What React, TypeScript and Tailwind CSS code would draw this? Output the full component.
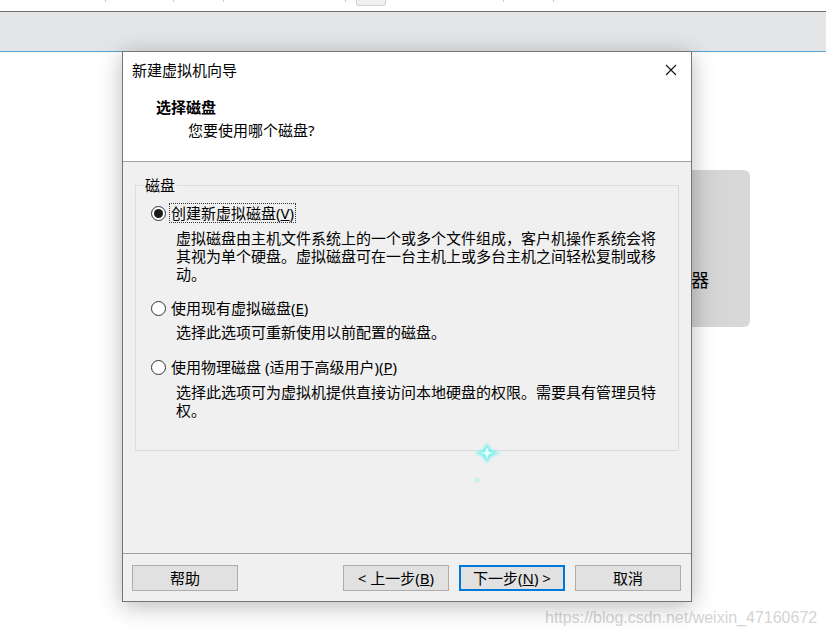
import React from "react";

const font = "font-['Noto_Sans','Noto_Sans_CJK_SC',sans-serif]";

const Radio: React.FC<{ checked?: boolean }> = ({ checked }) => (
    <span className="flex items-center justify-center w-[15px] h-[15px] rounded-full border border-[#333333] bg-white shrink-0">
        {checked && <span className="w-[9px] h-[9px] rounded-full bg-[#1a1a1a]"></span>}
    </span>
);

const Option: React.FC<{ checked?: boolean, focused?: boolean, label: React.ReactNode, lines: string[], gap: string }> = ({ checked, focused, label, lines, gap }) => {
    return (<div className="flex flex-col">
        <div className="flex items-center h-[20px] pl-[15px] gap-[3px]">
            <Radio checked={checked} />
            <span className={"px-[1px] leading-[18px] border border-dotted " + (focused ? "border-[#333333]" : "border-transparent")}>{label}</span>
        </div>
        <div className={"pl-[40px] leading-[18px] " + gap}>
            {lines.map((l, i) => <div key={i} className="whitespace-nowrap">{l}</div>)}
        </div>
    </div>);
}

const Button: React.FC<{ primary?: boolean, children: React.ReactNode }> = ({ primary, children }) => {
    return <div className={"flex items-center justify-center w-[106px] h-[26px] bg-[#e1e1e1] " + (primary ? "border-2 border-[#0078d7]" : "border border-[#adadad]")}>
        {children}
    </div>;
}

const App: React.FC = () => {
    return (
        <div className={"relative w-[826px] h-[638px] overflow-hidden bg-white text-black " + font}>
            {/* window behind */}
            <div className="relative h-[11px] bg-white">
                {[105, 173, 223, 345, 503, 553].map(x => <div key={x} className="absolute top-0 w-px h-[2px] bg-[#c8c8c8]" style={{ left: x }}></div>)}
                <div className="absolute left-[356px] top-0 w-[30px] h-[6px] rounded-b-[3px] border border-t-0 border-[#d0d0d0] bg-[#f0f0f0]"></div>
            </div>
            <div className="h-px bg-[#6e6e6e]"></div>
            <div className="h-[39px] bg-[#e4e5e7]"></div>
            <div className="h-px bg-[#5aa2d2]"></div>

            <div className="absolute left-[600px] top-[170px] w-[150px] h-[157px] rounded-[6px] bg-gradient-to-r from-[#c9c9c9] to-[#d9d9d9] flex flex-col items-end justify-end pr-[41px] pb-[37px]">
                <div className="text-[18px] leading-[20px]">服务器</div>
            </div>

            <div className="absolute left-[545px] top-[607px] text-[16px] leading-[22px] text-[#d4d4d4] font-['Liberation_Sans',sans-serif]">https://blog.csdn.net/weixin_47160672</div>

            {/* dialog */}
            <div className="absolute left-[122px] top-[51px] w-[570px] h-[551px] flex flex-col border border-[#767676] bg-[#f0f0f0] text-[15px] shadow-[0_4px_22px_rgba(0,0,0,0.28)]">
                <div className="flex flex-col h-[109px] bg-white">
                    <div className="flex items-center justify-between h-[36px] pl-[9px] pr-[14px]">
                        <div>新建虚拟机向导</div>
                        <svg width="12" height="12" viewBox="0 0 12 12">
                            <path d="M1 1 L11 11 M11 1 L1 11" stroke="#111" strokeWidth="1.1" />
                        </svg>
                    </div>
                    <div className="pl-[33px] mt-[9px] leading-[20px] font-bold">选择磁盘</div>
                    <div className="pl-[65px] mt-[3px] leading-[20px]">您要使用哪个磁盘?</div>
                </div>
                <div className="h-px bg-[#a0a0a0]"></div>
                <div className="flex flex-col h-[391px] pt-[13px] pl-[12px]">
                    <fieldset className="w-[544px] h-[276px] border border-[#dcdcdc]">
                        <legend className="ml-[7px] px-[2px] leading-[20px]">磁盘</legend>
                        <div className="flex flex-col mt-[8px]">
                            <Option checked focused gap="mt-[6px]"
                                label={<>创建新虚拟磁盘(<u>V</u>)</>}
                                lines={["虚拟磁盘由主机文件系统上的一个或多个文件组成，客户机操作系统会将", "其视为单个硬盘。虚拟磁盘可在一台主机上或多台主机之间轻松复制或移", "动。"]} />
                            <div className="mt-[15px]">
                                <Option gap="mt-[5px]"
                                    label={<>使用现有虚拟磁盘(<u>E</u>)</>}
                                    lines={["选择此选项可重新使用以前配置的磁盘。"]} />
                            </div>
                            <div className="mt-[16px]">
                                <Option gap="mt-[6px]"
                                    label={<>使用物理磁盘 (适用于高级用户)(<u>P</u>)</>}
                                    lines={["选择此选项可为虚拟机提供直接访问本地硬盘的权限。需要具有管理员特", "权。"]} />
                            </div>
                        </div>
                    </fieldset>
                    <svg className="ml-[338px] mt-[-8px]" width="30" height="44" viewBox="0 0 30 44">
                        <defs>
                            <filter id="glow"><feGaussianBlur stdDeviation="1.8" /></filter>
                        </defs>
                        <path d="M14 0 L18 7 L27 10 L18 13 L14 20 L10 13 L2 10 L10 7 Z" fill="#6ff0ee" filter="url(#glow)" />
                        <path d="M14 4 L16 9 L21 10 L16 11 L14 16 L12 11 L7 10 L12 9 Z" fill="#e8fffe" />
                        <circle cx="4" cy="37" r="2.5" fill="#aef1f2" filter="url(#glow)" />
                    </svg>
                </div>
                <div className="h-px bg-[#a0a0a0]"></div>
                <div className="flex items-start justify-between pt-[11px] pl-[9px] pr-[10px]">
                    <Button>帮助</Button>
                    <div className="flex gap-[10px]">
                        <Button>&lt; 上一步(<u>B</u>)</Button>
                        <Button primary>下一步(<u>N</u>) &gt;</Button>
                        <Button>取消</Button>
                    </div>
                </div>
            </div>
        </div>
    );
};

export default App;
